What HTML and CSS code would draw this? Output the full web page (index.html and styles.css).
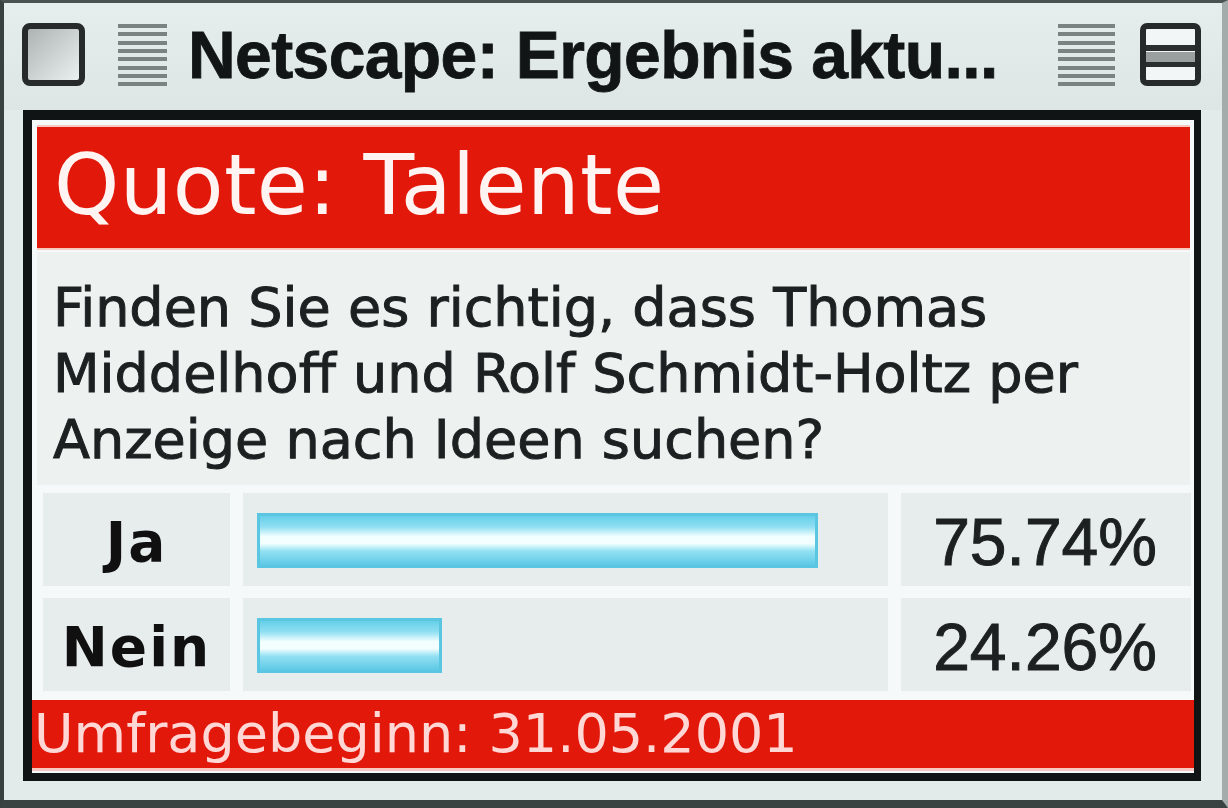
FILE: index.html
```html
<!DOCTYPE html>
<html lang="de">
<head>
<meta charset="utf-8">
<title>Netscape: Ergebnis aktuell</title>
<link rel="stylesheet" href="styles.css">
</head>
<body>
<div class="window">
  <div class="titlebar">
    <svg class="closebox" width="63" height="63" viewBox="0 0 63 63">
      <defs>
        <linearGradient id="cg" x1="0" y1="0" x2="1" y2="1">
          <stop offset="0" stop-color="#aab0b0"/>
          <stop offset="1" stop-color="#eef3f3"/>
        </linearGradient>
      </defs>
      <rect x="3" y="3" width="57" height="57" rx="5" fill="url(#cg)" stroke="#262a2a" stroke-width="6"/>
    </svg>
    <svg class="stripes" width="49" height="63" viewBox="0 0 49 63">
      <g fill="#7b8282">
        <rect x="0" y="1" width="49" height="4"/>
        <rect x="0" y="9" width="49" height="4"/>
        <rect x="0" y="18" width="49" height="4"/>
        <rect x="0" y="26" width="49" height="4"/>
        <rect x="0" y="34" width="49" height="4"/>
        <rect x="0" y="43" width="49" height="4"/>
        <rect x="0" y="51" width="49" height="4"/>
        <rect x="0" y="59" width="49" height="4"/>
      </g>
    </svg>
    <div class="title">Netscape: Ergebnis aktu...</div>
    <svg class="stripes right" width="57" height="63" viewBox="0 0 57 63">
      <g fill="#7b8282">
        <rect x="0" y="1" width="57" height="4"/>
        <rect x="0" y="9" width="57" height="4"/>
        <rect x="0" y="18" width="57" height="4"/>
        <rect x="0" y="26" width="57" height="4"/>
        <rect x="0" y="34" width="57" height="4"/>
        <rect x="0" y="43" width="57" height="4"/>
        <rect x="0" y="51" width="57" height="4"/>
        <rect x="0" y="59" width="57" height="4"/>
      </g>
    </svg>
    <svg class="zoombox" width="61" height="63" viewBox="0 0 61 63">
      <rect x="3" y="3" width="55" height="57" rx="4" fill="#f2f6f6" stroke="#262a2a" stroke-width="6"/>
      <rect x="6" y="22" width="49" height="6" fill="#2a2e2e"/>
      <rect x="6" y="29" width="49" height="10" fill="#9aa0a0"/>
      <rect x="6" y="39" width="49" height="5" fill="#2a2e2e"/>
    </svg>
  </div>

  <div class="content">
    <div class="poll-head">Quote: Talente</div>
    <div class="question">Finden Sie es richtig, dass Thomas<br>Middelhoff und Rolf Schmidt-Holtz per<br>Anzeige nach Ideen suchen?</div>
    <div class="results">
      <div class="cell label">Ja</div>
      <div class="cell barcell"><div class="bar" style="width:561px"></div></div>
      <div class="cell pct">75.74%</div>
      <div class="cell label">Nein</div>
      <div class="cell barcell"><div class="bar" style="width:185px"></div></div>
      <div class="cell pct">24.26%</div>
    </div>
    <div class="poll-foot">Umfragebeginn: 31.05.2001</div>
  </div>
</div>
</body>
</html>
```

FILE: styles.css
```css
html, body {
  margin: 0;
  padding: 0;
  background: #e2eaea;
}

.window {
  width: 1228px;
  height: 808px;
  box-sizing: border-box;
  background: #e3eaea;
  border-left: 4px solid #384040;
  border-top: 3px solid #4a5252;
  border-right: 6px solid #a3abab;
  border-bottom: 8px solid #3a4242;
  overflow: hidden;
}

.titlebar {
  height: 107px;
  display: flex;
  align-items: center;
  padding-left: 18px;
  padding-right: 21px;
  background: linear-gradient(#e6eded, #dde6e5);
}

.closebox {
  flex: none;
  display: block;
  margin-top: -5px;
}

.stripes {
  flex: none;
  display: block;
  margin-left: 33px;
  margin-top: -5px;
}

.stripes.right {
  margin-left: auto;
}

.zoombox {
  flex: none;
  display: block;
  margin-left: 25px;
  margin-top: -5px;
}

.title {
  margin-left: 21px;
  margin-top: -4px;
  font-family: "Liberation Sans", Arial, sans-serif;
  font-weight: bold;
  font-size: 66px;
  letter-spacing: -0.6px;
  color: #111515;
  -webkit-text-stroke: 0.8px #111515;
  white-space: nowrap;
}

.content {
  margin-left: 19px;
  width: 1178px;
  box-sizing: border-box;
  background: #f5f9f9;
  border-top: 10px solid #101414;
  border-left: 9px solid #101414;
  border-right: 7px solid #101414;
  border-bottom: 8px solid #101414;
  padding-top: 7px;
  padding-bottom: 5px;
}

.poll-head {
  margin: 0 4px 0 5px;
  height: 121px;
  box-sizing: border-box;
  padding-left: 17px;
  padding-bottom: 4px;
  display: flex;
  align-items: center;
  background: #e2180b;
  color: #fff4f2;
  font-family: "DejaVu Sans", Verdana, sans-serif;
  font-size: 83px;
  letter-spacing: 0.4px;
  box-shadow: 0 2px 0 #f6c8bf, 0 -2px 0 #f6c8bf;
}

.question {
  margin: 4px 4px 0 5px;
  padding: 23px 0 12px 16px;
  background: #edf2f1;
  font-family: "DejaVu Sans", Verdana, sans-serif;
  font-size: 54px;
  line-height: 66px;
  color: #1c2020;
  -webkit-text-stroke: 1px #1c2020;
}

.results {
  margin-top: 8px;
  padding-left: 11px;
  padding-right: 4px;
  display: grid;
  grid-template-columns: 187px 645px 290px;
  grid-auto-rows: 93px;
  column-gap: 13px;
  row-gap: 12px;
}

.cell {
  background: #e7ecec;
  display: flex;
  align-items: center;
}

.label {
  justify-content: center;
  font-family: "DejaVu Sans", Verdana, sans-serif;
  font-weight: bold;
  font-size: 55px;
  letter-spacing: 2px;
  color: #101010;
  padding-top: 4px;
  box-sizing: border-box;
}

.barcell {
  padding-left: 14px;
  padding-top: 1px;
  box-sizing: border-box;
}

.bar {
  height: 55px;
  box-sizing: border-box;
  border: 3px solid #5ac6e2;
  background: linear-gradient(#66cfea 0%, #8fdff2 22%, #f2ffff 42%, #f4ffff 56%, #92e0f2 72%, #5ec9e6 100%);
}

.pct {
  justify-content: flex-end;
  padding-right: 34px;
  padding-top: 4px;
  box-sizing: border-box;
  font-family: "Liberation Sans", Arial, sans-serif;
  font-size: 66px;
  color: #1c2020;
  -webkit-text-stroke: 1px #1c2020;
}

.poll-foot {
  margin-top: 9px;
  height: 68px;
  box-sizing: border-box;
  padding-left: 2px;
  display: flex;
  align-items: center;
  background: #e2180b;
  color: #ffd8d6;
  font-family: "DejaVu Sans", Verdana, sans-serif;
  font-size: 54px;
  line-height: 1;
  box-shadow: 0 3px 0 #f6c8bf;
}
```
